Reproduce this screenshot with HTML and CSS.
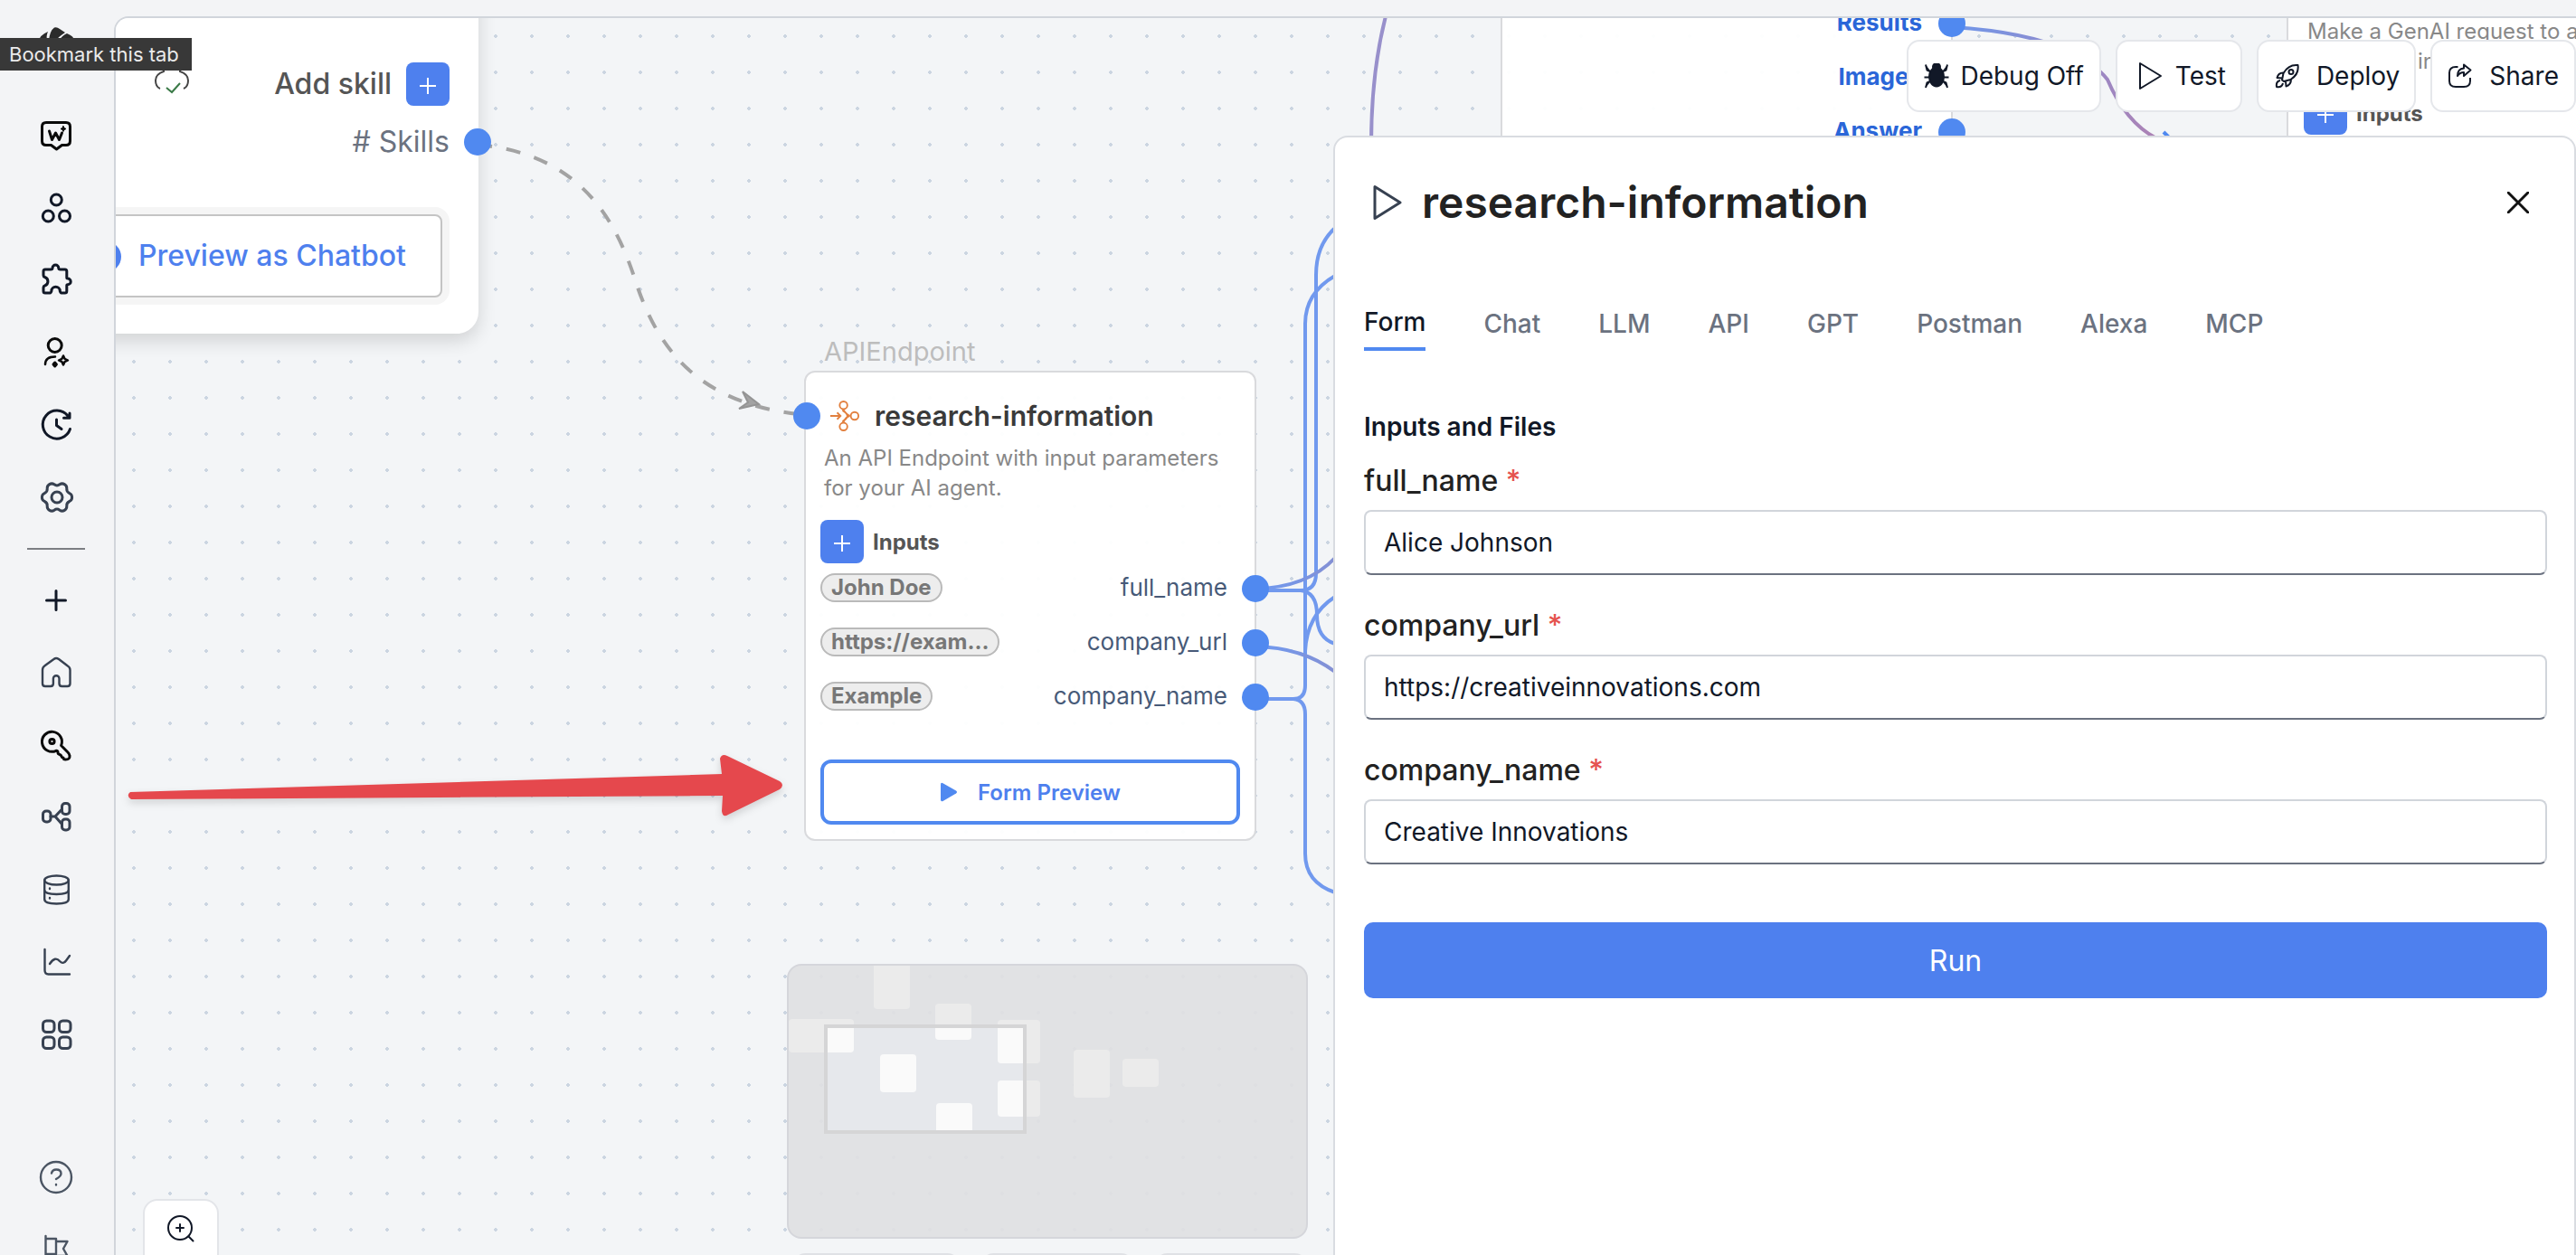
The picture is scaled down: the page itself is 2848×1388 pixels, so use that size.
FILE: index.html
```html
<!DOCTYPE html>
<html lang="en">
<head>
<meta charset="utf-8">
<title>research-information</title>
<link rel="stylesheet" href="styles.css">
</head>
<body>
<div class="app">
  <nav class="sidebar" aria-label="Main">
    <a class="logo" href="#" aria-label="Home page">
      <svg viewBox="0 0 40 40"><g fill="#2b2b2b"><path d="M12 15Q13 4 18 .500 21 -.500 24 2L30 6Q22 11 20 15z"/><path d="M1 15Q2 9 11 5 9 9 10 15z"/><path d="M23 15Q27 9 32 7 40 10 40 15z"/></g></svg>
    </a>
    <a class="nav" href="#" aria-label="Writer"><svg viewBox="0 0 40 40" class="black"><path d="M9 5.500h22q4.500 0 4.500 4.500v16q0 4.500-4.500 4.500h-4.500l-6 4.500-6-4.500H9q-4.500 0-4.500-4.500V10q0-4.500 4.500-4.500z"/><path d="M12.500 15l3 9.500 4-7.500 4 7.500 3-7.500"/><path stroke-width="1" fill="#0a0a0a" d="M28 9.500l1 2 2 1-2 1-1 2-1-2-2-1 2-1z"/></svg></a>
    <a class="nav" href="#" aria-label="Agents"><svg viewBox="0 0 40 40" class="ink"><circle cx="20.300" cy="11" r="6"/><circle cx="11.300" cy="29" r="6"/><circle cx="29.500" cy="29" r="6"/></svg></a>
    <a class="nav" href="#" aria-label="Plugins"><svg viewBox="0 0 40 40" class="ink"><path d="M6 10q0-2 2-2h6q2 0 2-1.500a3.400 3.400 0 0 1 6.800 0q0 1.500 2 1.500h5q2 0 2 2v7q0 1 1 1a3.400 3.400 0 0 1 0 6.800q-1 0-1 1V32q0 2-2 2h-4q-1 0-1.500-2a4.700 4.700 0 0 0-9.400 0q-.5 2-1.500 2H8q-2 0-2-2v-4q0-1.500 1.500-2a5 5 0 0 0 0-9.500Q6 16 6 14.500z"/></svg></a>
    <a class="nav" href="#" aria-label="Personas"><svg viewBox="0 0 40 40" class="black"><circle cx="18.700" cy="12" r="7.500"/><path d="M8 33q0-8.500 11-8.500M28 23.500l1.500 3.300 3.500 1.700-3.500 1.700-1.500 3.300-1.500-3.300-3.500-1.700 3.500-1.700z" stroke-width="2.500"/><path d="M18.700 31l1.700 2-1.700 2-1.700-2z"/></svg></a>
    <a class="nav" href="#" aria-label="History"><svg viewBox="0 0 40 40" class="ink"><path d="M35.500 24.500A15.500 15.500 0 1 1 33 10M28.500 12.300h6.500V7M20.500 14v6.500l5.500 4"/></svg></a>
    <a class="nav" href="#" aria-label="Settings"><svg viewBox="0 0 40 40" class="slate"><path d="M34.800 15.500A5 5 0 0 1 34.800 24.500A5 5 0 0 0 31.800 29.700A5 5 0 0 1 24 34.200A5 5 0 0 0 18 34.200A5 5 0 0 1 10.200 29.700A5 5 0 0 0 7.200 24.500A5 5 0 0 1 7.200 15.500A5 5 0 0 0 10.200 10.300A5 5 0 0 1 18 5.800A5 5 0 0 0 24 5.800A5 5 0 0 1 31.800 10.300A5 5 0 0 0 34.800 15.500z"/><circle cx="21" cy="20" r="6"/></svg></a>
    <hr class="rule">
    <a class="nav" href="#" aria-label="New"><svg viewBox="0 0 40 40" class="ink"><path d="M9.500 20h21M20 9.500v21"/></svg></a>
    <a class="nav" href="#" aria-label="Home"><svg viewBox="0 0 40 40" class="slate thin"><path d="M5 17q0-3 2.500-4.700L17.500 5q2.500-2 5.500 0l9.500 7.300q3 1.700 3 4.700v15q0 3-3 3h-6q-3 0-3-3v-5.500a3.300 3.300 0 0 0-6.600 0V32q0 3-3 3H8q-3 0-3-3z"/></svg></a>
    <a class="nav" href="#" aria-label="Keys"><svg viewBox="0 0 40 40" class="black"><path d="M25.600 20.500A11 11 0 1 0 20 26.300q2-.3 2 1.700 0 2 1.500 2.300 2 .5 2.500 2.200.5 1.500 2 1.500 0 2 2.500 2 5 0 4.500-4 0-2-2-4z"/><circle cx="15.500" cy="16" r="2.600"/></svg></a>
    <a class="nav" href="#" aria-label="Workflows"><svg viewBox="0 0 40 40" class="slate"><rect x="5.500" y="13" width="8.500" height="12" rx="3.500"/><rect x="26.500" y="4.500" width="8.500" height="12" rx="3.500"/><rect x="26.500" y="22" width="8.500" height="12" rx="3.500"/><path d="M14 19h5l7.500-8M19 19l7.500 8.500"/></svg></a>
    <a class="nav" href="#" aria-label="Data"><svg viewBox="0 0 40 40" class="slate thin"><ellipse cx="20.500" cy="9.500" rx="13.300" ry="5"/><path d="M7.200 9.500v21q0 5 13.300 5t13.300-5v-21M7.200 20q0 5 13.300 5t13.300-5M13 18.500v.5M13 29v.5"/></svg></a>
    <a class="nav" href="#" aria-label="Analytics"><svg viewBox="0 0 40 40" class="slate thin"><path d="M7.500 6v23q0 4.500 4 4.500H35M13 22q6-9 11-3 4 4 7-.5l4-5.500"/></svg></a>
    <a class="nav" href="#" aria-label="Apps"><svg viewBox="0 0 40 40" class="slate"><rect x="5.500" y="5" width="12.500" height="12.500" rx="4"/><rect x="23.500" y="5" width="12.500" height="12.500" rx="4"/><rect x="5.500" y="23" width="12.500" height="12.500" rx="4"/><rect x="23.500" y="23" width="12.500" height="12.500" rx="4"/></svg></a>
    <a class="nav foot" href="#" aria-label="Help"><svg viewBox="0 0 40 40" class="gray thin"><circle cx="20" cy="20" r="17"/><path d="M15 15.500q1-4 5.200-4 5.300 0 5.300 4.500 0 3-5.500 6M20 28v.5"/></svg></a>
    <a class="nav" href="#" aria-label="Tour"><svg viewBox="0 0 40 40" class="gray thin"><path d="M8.500 5v34M8.500 8h11.500v17H8.500M20 11h12.500l-4.500 8 4.500 8H20"/></svg></a>
  </nav>

  <main class="board">
    <svg class="edges" width="2720" height="1368" viewBox="128 20 2720 1368" fill="none">
      <defs>
        <linearGradient id="fade" x1="2158" x2="2385" y1="0" y2="0" gradientUnits="userSpaceOnUse"><stop offset="0" stop-color="#6f97ea"/><stop offset="1" stop-color="#ad82b4"/></linearGradient>
        <linearGradient id="soft" x1="1400" x2="1475" y1="0" y2="0" gradientUnits="userSpaceOnUse"><stop offset="0" stop-color="#7199ee"/><stop offset="1" stop-color="#8490d4"/></linearGradient>
      </defs>
      <g stroke="#7199ee" stroke-width="4">
        <path d="M1388 653H1438Q1455 653 1455 634V304Q1455 272 1475 253"/>
        <path d="M1438 653Q1456 655 1456 680Q1456 706 1476 712"/>
        <path d="M1388 773H1430Q1443 773 1443 758V358Q1443 324 1476 305"/>
        <path d="M1430 773Q1443 774 1443 790V944Q1443 976 1476 987"/>
        <path d="M1443 720Q1445 680 1476 660"/>
      </g>
      <path d="M1388 651Q1445 650 1476 617" stroke="url(#soft)" stroke-width="4"/>
      <path d="M1388 715Q1440 716 1476 743" stroke="url(#soft)" stroke-width="4"/>
      <path d="M1532 18Q1516 80 1516 160" stroke="#9890cb" stroke-width="4"/>
      <path d="M2158 30Q2290 38 2330 88Q2350 135 2384 153" stroke="url(#fade)" stroke-width="4"/>
      <path d="M2392 146l10 10" stroke="#5089f0" stroke-width="4"/>
      <path d="M528 160C640 170 680 241 702 309S765 448 892 459" stroke="#a3a3a3" stroke-width="4" stroke-dasharray="16 16"/>
      <path d="M821 433L839 447 817 452 827 445z" fill="#a3a3a3" stroke="#949494" stroke-width="2"/>
    </svg>

    <section class="node bot">
      <svg class="cloud" viewBox="0 0 40 40" fill="none" stroke-width="2"><path d="M11 12v3q-9 3-9 10 0 7 5 9M29 12v3q9 3 9 10 0 7-5 9" stroke="#444"/><path d="M14 33l6 5 9-10" stroke="#3a7a47"/></svg>
      <div class="bot-row"><span class="bot-add" id="add-skill">Add skill</span><button class="plus" aria-labelledby="add-skill"><svg viewBox="0 0 48 48"><path d="M15 26h18M24 17v18"/></svg></button></div>
      <div class="bot-row skills"># Skills</div>
      <div class="ring"><button class="chatbot"><span class="blob"></span>Preview as Chatbot</button></div>
      <i class="handle h-skill"></i>
    </section>

    <section class="node api">
      <span class="kind">APIEndpoint</span>
      <i class="handle h-in"></i>
      <h2 class="node-title"><svg viewBox="0 0 36 36"><path d="M1 18h12M9 14l4 4-4 4M16 10q3 6 8 8M16 26q3-7 8-8M16 10v2q5 3 5 6t-5 6v2"/><circle cx="16.500" cy="5.500" r="4.500"/><circle cx="16.500" cy="30.500" r="4.500"/><circle cx="29.500" cy="18" r="4.500"/></svg>research-information</h2>
      <p class="desc">An API Endpoint with input parameters for your AI agent.</p>
      <div class="inputs"><button class="plus" aria-labelledby="inputs-a"><svg viewBox="0 0 48 48"><path d="M15 26h18M24 17v18"/></svg></button><span id="inputs-a">Inputs</span></div>
      <ul class="ports">
        <li><span class="pill">John Doe</span><span class="port">full_name</span><i class="handle"></i></li>
        <li><span class="pill">https://exam...</span><span class="port">company_url</span><i class="handle"></i></li>
        <li><span class="pill">Example</span><span class="port">company_name</span><i class="handle"></i></li>
      </ul>
      <button class="preview"><svg viewBox="0 0 20 22"><path d="M1 2.500Q1 0 3.500 1.300L18 9.500Q20 11 18 12.500L3.500 21Q1 22 1 19.500z"/></svg>Form Preview</button>
    </section>

    <section class="node outs">
      <ul class="results">
        <li>Results<i class="handle"></i></li>
        <li>Images<i class="handle"></i></li>
        <li>Answer<i class="handle"></i></li>
      </ul>
    </section>

    <section class="node gen">
      <p class="desc">Make a GenAI request to a<br><span class="gen-in">in</span></p>
      <div class="inputs"><button class="plus" aria-labelledby="inputs-b"><svg viewBox="0 0 48 48"><path d="M15 26h18M24 17v18"/></svg></button><span id="inputs-b">Inputs</span></div>
    </section>

    <svg class="arrow" viewBox="0 0 740 80"><path d="M6 45L660 25 658 8Q660 2 666 5L724 33Q730 37 724 42L667 70Q661 74 660 66L661 49 7 53Q1 49 6 45z"/></svg>

    <div class="minimap">
      <svg viewBox="0 0 572 300">
        <defs><g id="mini"><rect x="0" y="59" width="72" height="37" rx="4"/><rect x="94" y="-6" width="40" height="54" rx="4"/><rect x="162" y="42" width="40" height="40" rx="4"/><rect x="101" y="98" width="40" height="42" rx="4"/><rect x="163" y="152" width="40" height="60" rx="4"/><rect x="231" y="60" width="47" height="48" rx="4"/><rect x="231" y="127" width="47" height="40" rx="4"/><rect x="315" y="93" width="40" height="53" rx="4"/><rect x="369" y="103" width="40" height="31" rx="4"/></g><clipPath id="view"><rect x="42" y="68" width="218" height="115"/></clipPath><clipPath id="upper"><rect width="572" height="182"/></clipPath></defs>
        <use href="#mini" fill="#ebebeb" clip-path="url(#upper)"/>
        <g clip-path="url(#view)"><rect x="40" y="66" width="222" height="120" fill="#e6e8ec"/><use href="#mini" fill="#fafafa"/></g>
        <rect x="41" y="67" width="220" height="117" fill="none" stroke="#d5d5d6" stroke-width="4"/>
      </svg>
    </div>
    <div class="stubs"><i class="wide"></i><i></i><i></i></div>

    <button class="zoom" aria-label="Zoom in"><svg viewBox="0 0 32 32"><circle cx="15" cy="15" r="13"/><path d="M24.500 24.500l5 5M11 15h8M15 11v8"/></svg></button>

    <div class="toolbar">
      <button class="tool"><svg class="bug" viewBox="0 0 28 28"><ellipse cx="14" cy="15" rx="8" ry="10.500"/><circle cx="14" cy="4" r="4"/><path d="M8 9.500L3.500 7.500 2 1.500M20 9.500l4.500-2L26 1.500M7 15.500H.5M21 15.500h6.500M8 19.500L3.500 21.500 2 27M20 19.500l4.500 2L26 27"/></svg>Debug Off</button>
      <button class="tool test"><svg viewBox="0 0 28 32"><path d="M3 2v28L26 16z"/></svg>Test</button>
      <button class="tool deploy"><svg viewBox="0 0 28 28"><path d="M25.500 2Q15 1 9.500 11L8 18.500 10 20l7.500-2Q27 12 25.500 2zM10 10.500Q4 10 2.500 16l6 .5M18 17.500Q18 24 12.500 25.500L12 19.500M6 19q-5 1-4 7 6 1 7-4"/><circle cx="18" cy="9.500" r="2.500"/></svg>Deploy</button>
      <button class="tool share"><svg viewBox="0 0 28 28"><path d="M11.500 4H9Q2 4 2 10.500v9Q2 26 9 26h9q7 0 7-6.500V16M18 1.500l7.500 6-7.500 6.500v-4q-4.500 0-7 4 0-8 7-8.500z"/></svg>Share</button>
    </div>

    <aside class="panel">
      <header class="panel-head">
        <svg class="play" viewBox="0 0 32 40"><path d="M2 2.500v35L30 20z"/></svg>
        <h1>research-information</h1>
        <button class="close" aria-label="Close"><svg viewBox="0 0 24 24"><path d="M1 1l22 22M23 1L1 23"/></svg></button>
      </header>
      <nav class="tabs" aria-label="Preview type"><a class="on" href="#">Form</a><a href="#">Chat</a><a href="#">LLM</a><a href="#">API</a><a href="#">GPT</a><a href="#">Postman</a><a href="#">Alexa</a><a href="#">MCP</a></nav>
      <form class="form">
        <h3>Inputs and Files</h3>
        <div class="field"><label for="full_name">full_name <span>*</span></label><input id="full_name" type="text" value="Alice Johnson"></div>
        <div class="field"><label for="company_url">company_url <span>*</span></label><input id="company_url" type="text" value="https://creativeinnovations.com"></div>
        <div class="field"><label for="company_name">company_name <span>*</span></label><input id="company_name" type="text" value="Creative Innovations"></div>
        <button class="run" type="button">Run</button>
      </form>
    </aside>
  </main>
  <div class="tip" role="tooltip">Bookmark this tab</div>
</div>
</body>
</html>
```
FILE: styles.css
```css
* { box-sizing: border-box; }
body { margin: 0; font-family: Inter, "Liberation Sans", sans-serif; font-size: 28px; color: #111827; background: #f3f4f6; }
button { font: inherit; color: inherit; border: 0; padding: 0; margin: 0; }
ul { list-style: none; margin: 0; padding: 0; }
h1, h2, h3, p { margin: 0; }
svg { display: block; }

.app { display: flex; height: 100vh; padding-top: 18px; overflow: hidden; position: relative; }

/* Sidebar */
.sidebar { width: 126px; flex: none; display: flex; flex-direction: column; align-items: center; padding-right: 2px; margin-top: -18px; background: #f3f4f6; }
.logo { height: 110px; padding-top: 30px; flex: none; }
.logo svg, .nav svg { width: 40px; height: 40px; fill: none; stroke-width: 3; stroke-linecap: round; stroke-linejoin: round; }
.nav { height: 80px; width: 80px; flex: none; display: flex; align-items: center; justify-content: center; }
.nav svg.thin { stroke-width: 2.4; }
.black { stroke: #0a0a0a; }
.ink { stroke: #111827; }
.slate { stroke: #374151; }
.gray { stroke: #4b5563; }
.rule { width: 64px; height: 2px; flex: none; border: 0; background: #7c7e83; margin: 16px 0; }
.foot { margin-top: 78px; }
.tip { position: absolute; left: 0; top: 42px; height: 36px; padding: 0 14px 0 10px; background: #383838; color: #ebebeb; font-size: 22px; line-height: 36px; }

/* Canvas */
.board { flex: 1; position: relative; overflow: hidden; border-top: 2px solid #d1d5db; border-left: 2px solid #d1d5db; border-top-left-radius: 16px; background: #f3f5f7 radial-gradient(circle, #cbd5e1 0, #cbd5e1 2px, transparent 2px) 0 0 / 40px 40px; }
.edges { position: absolute; left: 0; top: 0; }
.node { position: absolute; background: rgba(255, 255, 255, 0.96); border: 2px solid #d9dadd; border-radius: 12px; }
.handle { position: absolute; width: 30px; height: 30px; border-radius: 50%; background: #5089f0; }
.plus { width: 48px; height: 48px; border-radius: 8px; background: #4e80ee; flex: none; }
.plus svg { width: 48px; height: 48px; stroke: #fff; stroke-width: 2; }

.bot { left: -160px; top: -80px; width: 561px; height: 429px; padding: 129px 32px 0; border: 0; border-radius: 24px; background: #fff; box-shadow: 0 8px 20px rgba(0, 0, 0, 0.14); font-size: 32px; line-height: 48px; }
.cloud { position: absolute; left: 202px; top: 124px; width: 40px; height: 40px; }
.bot-row { display: flex; justify-content: flex-end; gap: 16px; }
.bot-add { color: #555; font-weight: 500; }
.skills { color: #6b7280; margin-top: 16px; }
.h-skill { right: -14px; top: 202px; }
.ring { margin-top: 48px; padding: 8px; border-radius: 16px; background: #f5f5f5; }
.chatbot { position: relative; width: 100%; height: 92px; padding-right: 38px; text-align: right; color: #4e80ee; font-weight: 500; background: #fff; border: 2px solid #c4c4c4; border-radius: 8px; }
.blob { position: absolute; left: 90px; top: 28px; width: 34px; height: 34px; border-radius: 50%; background: #4e80ee; }

.api { left: 761px; top: 390px; width: 500px; height: 520px; padding: 28px 16px 0; }
.kind { position: absolute; left: 20px; top: -40px; font-size: 29px; line-height: 34px; color: #bdbdbd; }
.h-in { left: -14px; top: 33px; }
.node-title { display: flex; align-items: center; gap: 16px; padding-left: 10px; font-size: 30px; font-weight: 600; line-height: 40px; color: #3a3a3a; }
.node-title svg { width: 34px; height: 36px; fill: none; stroke: #e2803f; stroke-width: 2; }
.desc { margin: 10px 0 0 4px; font-size: 24px; line-height: 33px; color: #888; }
.inputs { display: flex; align-items: center; gap: 10px; margin-top: 19px; font-size: 24px; font-weight: 700; color: #555; }
.ports { margin-top: 11px; }
.ports li { position: relative; height: 60px; display: flex; justify-content: space-between; align-items: flex-start; }
.pill { height: 32px; padding: 0 10px; border: 2px solid #bababa; border-radius: 16px; background: #ededed; color: #777; font-size: 24px; font-weight: 700; line-height: 28px; }
.port { padding-right: 14px; font-size: 26px; line-height: 32px; color: #475a78; }
.ports .handle { right: -32px; top: 2px; }
.preview { display: flex; align-items: center; justify-content: center; gap: 22px; width: 100%; height: 72px; margin-top: 26px; border: 4px solid #5089f0; border-radius: 12px; background: #fff; color: #4e80ee; font-size: 24px; font-weight: 600; }
.preview svg { width: 20px; height: 22px; fill: #5089f0; }

.outs { left: 1531px; top: -40px; width: 500px; height: 260px; padding: 25px 32px; }
.results { font-size: 26px; font-weight: 700; line-height: 36px; color: #2a66d8; }
.results li { position: relative; height: 60px; text-align: right; }
.results .handle { right: -48px; top: 4px; }

.gen { left: 2400px; top: -120px; width: 498px; height: 400px; padding: 106px 17px 0; }
.gen .inputs { margin-top: 17px; }
.gen-in { padding-left: 122px; }

.arrow { position: absolute; left: 10px; top: 811px; width: 740px; height: 80px; fill: #e5484d; filter: drop-shadow(0 4px 4px rgba(0, 0, 0, 0.14)); }

.minimap { position: absolute; left: 742px; top: 1046px; width: 576px; height: 304px; border: 2px solid #d5d6db; border-radius: 16px; background: rgba(223, 224, 226, 0.93); overflow: hidden; }
.stubs { position: absolute; left: 750px; top: 1366px; display: flex; gap: 26px; }
.stubs i { width: 166px; height: 60px; border: 2px solid #dfe1e5; border-radius: 12px; background: #fff; }
.stubs .wide { width: 182px; }
.zoom { position: absolute; left: 30px; bottom: -20px; width: 84px; height: 82px; padding: 0 24px 16px; border: 2px solid #e3e5e9; border-radius: 16px; background: #fff; }
.zoom svg { width: 32px; height: 32px; fill: none; stroke: #111827; stroke-width: 2; stroke-linecap: round; }

.toolbar { position: absolute; right: 0; top: 24px; display: flex; gap: 16px; }
.tool { display: flex; align-items: center; gap: 12px; height: 80px; padding: 0 17px; border: 2px solid #e5e7eb; border-radius: 14px; background: #fff; color: #111827; }
.tool svg { width: 28px; height: 28px; fill: none; stroke: #111827; stroke-width: 2; stroke-linejoin: round; }
.tool .bug { fill: #111827; }
.tool.test { padding: 0 16px 0 22px; gap: 14px; }
.tool.test svg { height: 32px; }
.tool.deploy { padding: 0 16px 0 18px; gap: 18px; }
.tool.share { gap: 18px; }

/* Preview panel */
.panel { position: absolute; right: 0; top: 130px; bottom: -2px; width: calc(50% + 14px); padding: 0 30px 0 32px; border: 2px solid #d9dce1; border-bottom: 0; border-radius: 16px 16px 0 0; background: #fff; }
.panel-head { display: flex; align-items: center; height: 144px; padding-left: 10px; }
.play { width: 32px; height: 40px; fill: none; stroke: #374151; stroke-width: 3; stroke-linejoin: round; }
.panel h1 { flex: 1; margin-left: 22px; font-size: 48px; font-weight: 600; line-height: 60px; color: #222; }
.close { width: 24px; height: 24px; margin-right: 20px; background: none; }
.close svg { width: 24px; height: 24px; stroke: #111; stroke-width: 3; stroke-linecap: round; }
.tabs { display: flex; gap: 64px; height: 92px; padding-top: 42px; font-weight: 500; line-height: 40px; }
.tabs a { color: #6b7280; text-decoration: none; }
.tabs .on { margin-top: -2px; height: 52px; color: #111827; border-bottom: 4px solid #5089f0; }
.form { padding-top: 64px; }
.form h3 { font-size: 28px; font-weight: 600; line-height: 40px; }
.field { display: flex; flex-direction: column; padding-bottom: 16px; }
.field label { height: 72px; padding-top: 20px; font-size: 32px; font-weight: 500; line-height: 40px; color: #222; }
.field label span { color: #e5534f; }
.field input { height: 72px; padding: 0 20px; border: 2px solid #d1d5db; border-bottom-color: #6b7280; border-radius: 8px; background: #fff; font: inherit; color: #111827; }
.run { width: 100%; height: 84px; margin-top: 48px; border-radius: 10px; background: #4e80ee; color: #fff; font-size: 32px; }
```
